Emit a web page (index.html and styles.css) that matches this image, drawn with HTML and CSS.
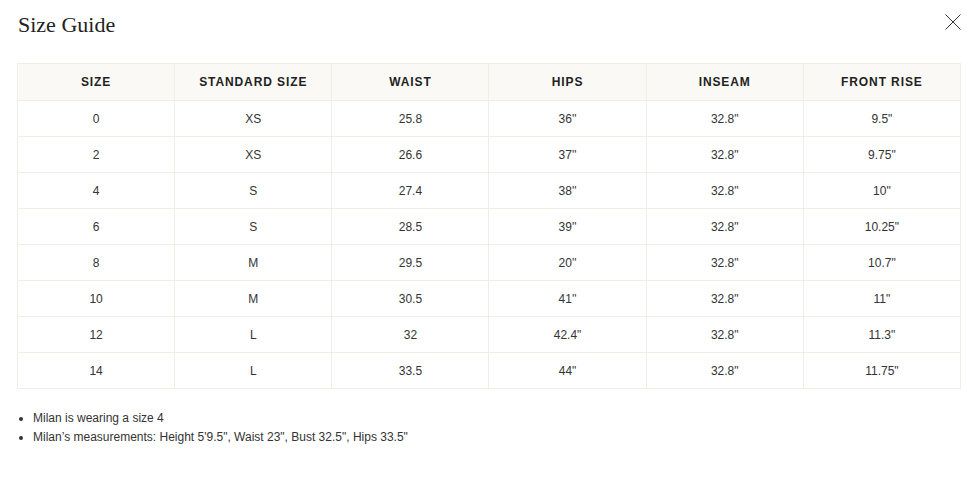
FILE: index.html
```html
<!DOCTYPE html>
<html>
<head>
<meta charset="utf-8">
<link rel="stylesheet" href="styles.css">
</head>
<body>
<div class="modal">
  <div class="modal-head">
    <h1 class="title">Size Guide</h1>
    <button class="close" aria-label="Close">
      <svg width="16" height="16" viewBox="0 0 16 16"><path d="M0.5 0.5L15.5 15.5M15.5 0.5L0.5 15.5" stroke="#333" stroke-width="1" fill="none"/></svg>
    </button>
  </div>
  <table class="size-table">
    <thead>
      <tr><th>SIZE</th><th>STANDARD SIZE</th><th>WAIST</th><th>HIPS</th><th>INSEAM</th><th>FRONT RISE</th></tr>
    </thead>
    <tbody>
      <tr><td>0</td><td>XS</td><td>25.8</td><td>36''</td><td>32.8"</td><td>9.5"</td></tr>
      <tr><td>2</td><td>XS</td><td>26.6</td><td>37''</td><td>32.8"</td><td>9.75"</td></tr>
      <tr><td>4</td><td>S</td><td>27.4</td><td>38''</td><td>32.8"</td><td>10"</td></tr>
      <tr><td>6</td><td>S</td><td>28.5</td><td>39''</td><td>32.8"</td><td>10.25"</td></tr>
      <tr><td>8</td><td>M</td><td>29.5</td><td>20''</td><td>32.8"</td><td>10.7"</td></tr>
      <tr><td>10</td><td>M</td><td>30.5</td><td>41''</td><td>32.8"</td><td>11"</td></tr>
      <tr><td>12</td><td>L</td><td>32</td><td>42.4"</td><td>32.8"</td><td>11.3"</td></tr>
      <tr><td>14</td><td>L</td><td>33.5</td><td>44"</td><td>32.8"</td><td>11.75"</td></tr>
    </tbody>
  </table>
  <ul class="notes">
    <li>Milan is wearing a size 4</li>
    <li>Milan’s measurements: Height 5'9.5", Waist 23", Bust 32.5", Hips 33.5"</li>
  </ul>
</div>
</body>
</html>
```
FILE: styles.css
```css
html, body {
  margin: 0;
  padding: 0;
  background: #fff;
}
.modal {
  padding: 0 6px 0 17px;
  font-family: "Liberation Sans", Arial, sans-serif;
  color: #333;
}
.modal-head {
  display: flex;
  justify-content: space-between;
  align-items: flex-start;
  height: 63px;
}
.title {
  margin: 12px 0 0 1px;
  font-family: "Liberation Serif", "Times New Roman", serif;
  font-weight: normal;
  font-size: 22px;
  line-height: 26px;
  color: #222;
}
.close {
  margin-top: 14px;
  padding: 0;
  border: 0;
  background: none;
  width: 16px;
  height: 16px;
  margin-right: 0;
}
.close svg { display: block; }
.size-table {
  width: 944px;
  border-collapse: collapse;
  table-layout: fixed;
}
.size-table th,
.size-table td {
  border: 1px solid #f1eee5;
  text-align: center;
  padding: 0;
}
.size-table th {
  background: #faf9f5;
  height: 36px;
  font-size: 12px;
  font-weight: bold;
  letter-spacing: 0.9px;
  color: #222;
}
.size-table td {
  height: 35px;
  font-size: 12px;
  color: #333;
}
.notes {
  margin: 20px 0 0 0;
  padding: 0 0 0 16px;
  font-size: 12px;
  line-height: 19px;
  color: #333;
}
.notes li { padding-left: 0; }
```
